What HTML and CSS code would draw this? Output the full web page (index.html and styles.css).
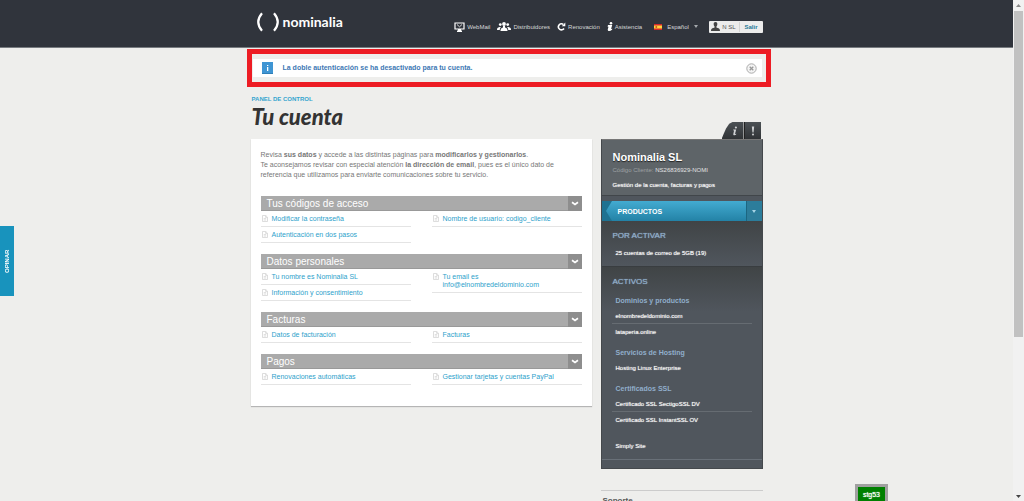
FILE: index.html
```html
<!DOCTYPE html>
<html lang="es">
<head>
<meta charset="utf-8">
<title>Nominalia - Tu cuenta</title>
<link rel="stylesheet" href="styles.css">
</head>
<body>
<svg class="defs" aria-hidden="true">
  <symbol id="doc" viewBox="0 0 6 7"><path d="M.5.5h3.3l1.7 1.7v4.3h-5zM3.6.7v1.7h1.7M1.7 3.6h2.5M1.7 5h2.5" fill="none" stroke="#cfcfcf" stroke-width=".7"/></symbol>
  <symbol id="chev" viewBox="0 0 8 5"><path d="M1 1.2l3 2.2 3-2.2" fill="none" stroke="#fff" stroke-width="1.7"/></symbol>
</svg>
<div class="page">
  <header class="header">
    <div class="wrap header-in">
      <a class="logo" href="#">
        <svg width="26" height="20" viewBox="0 0 26 20" aria-hidden="true"><path d="M6 1.200Q-1.500 10 6 18.800M18 1.200Q25.500 10 18 18.800" fill="none" stroke="#fff" stroke-width="2.200"/></svg>
        <span>nominalia</span>
      </a>
      <nav class="nav">
        <a href="#"><svg width="11" height="10" viewBox="0 0 11 10"><path d="M1 1h9v6H1z" fill="none" stroke="#fff" stroke-width="1.200"/><path d="M3 2.500l2.500 2.300L8 2.500" fill="none" stroke="#fff" stroke-width=".8"/><path d="M4 7h3v1.500h1V10H3V8.500h1z" fill="#fff"/></svg>WebMail</a>
        <a href="#"><svg width="14" height="9" viewBox="0 0 14 9" fill="#fff"><circle cx="7" cy="2" r="1.900"/><circle cx="3.300" cy="2.600" r="1.400"/><circle cx="10.700" cy="2.600" r="1.400"/><path d="M3.500 9c0-2 .5-3 2.500-3.500V4h2v1.500c2 .5 2.500 1.500 2.500 3.500zM0 8c0-1.800.5-2.500 2.500-3l1.500.2C3 6 2.800 7 2.800 8zM14 8c0-1.800-.5-2.500-2.500-3l-1.500.2C11 6 11.200 7 11.200 8z"/></svg>Distribuidores</a>
        <a href="#"><svg width="9" height="9" viewBox="0 0 9 9"><path d="M6.300 2.300A3 3.100 0 1 0 7 6.500" fill="none" stroke="#fff" stroke-width="1.600"/><path d="M8.300.4v3.800H4.800z" fill="#fff"/></svg>Renovación</a>
        <a href="#"><svg width="6" height="9" viewBox="0 0 6 9" fill="#fff"><circle cx="4" cy="1.300" r="1.300"/><path d="M1 3.100h4.200L4.100 7l1.300-.3-.4 1C3 9.500.4 9.300.8 7.300l.7-2.600H.6z"/></svg>Asistencia</a>
      </nav>
      <label class="lang">
        <svg width="8" height="6" viewBox="0 0 8 6" aria-label="Idioma"><path d="M0 0h8v6H0z" fill="#d3272b"/><path d="M0 1.500h8v3H0z" fill="#ffd23c"/><path d="M1.500 2h1.600v2H1.500z" fill="#c9661e"/></svg>
        <select><option>Español</option></select>
        <svg width="4" height="3" viewBox="0 0 4 3" aria-hidden="true"><path d="M0 0h4L2 3z" fill="#a5a9ad"/></svg>
      </label>
      <div class="user">
        <svg width="9" height="9" viewBox="0 0 9 9" aria-hidden="true"><path d="M4.500 0C6 0 6.500 1 6.300 2.500 6.200 3.600 5.700 4.200 5.400 4.600v.8C7 6 9 6 9 9H0c0-3 2-3 3.600-3.600v-.8C3.300 4.200 2.800 3.600 2.700 2.500 2.500 1 3 0 4.500 0z" fill="#444"/></svg>
        <span>N SL</span><a href="#">Salir</a>
      </div>
    </div>
  </header>

  <div class="wrap">
    <div class="callout">
      <div class="notice" role="status">
        <svg width="11" height="12" viewBox="0 0 11 12" aria-hidden="true"><path d="M0 0h11v12H0z" fill="#2f7fb8"/><path d="M0 0h11v11H0z" fill="#3f95d3"/><path d="M5 3h1.300v1H5zM5 5h1.300v4H5z" fill="#fff"/></svg>
        <p>La doble autenticación se ha desactivado para tu cuenta.</p>
        <button class="close" type="button" aria-label="Cerrar"><svg width="11" height="11" viewBox="0 0 11 11"><circle cx="5.500" cy="5.500" r="4.700" fill="#f4f4f4" stroke="#aaa"/><path d="M3.700 3.700l3.600 3.600M7.300 3.700L3.700 7.300" stroke="#999" stroke-width="1.300"/></svg></button>
      </div>
    </div>
  </div>

  <div class="wrap columns">
    <main class="main">
      <a class="crumb" href="#">PANEL DE CONTROL</a>
      <h1>Tu cuenta</h1>
      <div class="card">
        <p class="intro">Revisa <b>sus datos</b> y accede a las distintas páginas para <b>modificarlos y gestionarlos</b>.<br>Te aconsejamos revisar con especial atención <b>la dirección de email</b>, pues es el único dato de<br>referencia que utilizamos para enviarte comunicaciones sobre tu servicio.</p>

        <section class="group">
          <h2>Tus códigos de acceso<button type="button" aria-label="Plegar"><svg width="8" height="5"><use href="#chev"/></svg></button></h2>
          <div class="lists">
            <ul>
              <li><svg width="6" height="7"><use href="#doc"/></svg><a href="#">Modificar la contraseña</a></li>
              <li><svg width="6" height="7"><use href="#doc"/></svg><a href="#">Autenticación en dos pasos</a></li>
            </ul>
            <ul>
              <li><svg width="6" height="7"><use href="#doc"/></svg><a href="#">Nombre de usuario: codigo_cliente</a></li>
            </ul>
          </div>
        </section>

        <section class="group">
          <h2>Datos personales<button type="button" aria-label="Plegar"><svg width="8" height="5"><use href="#chev"/></svg></button></h2>
          <div class="lists">
            <ul>
              <li><svg width="6" height="7"><use href="#doc"/></svg><a href="#">Tu nombre es Nominalia SL</a></li>
              <li><svg width="6" height="7"><use href="#doc"/></svg><a href="#">Información y consentimiento</a></li>
            </ul>
            <ul>
              <li><svg width="6" height="7"><use href="#doc"/></svg><a href="#">Tu email es<br>info@elnombredeldominio.com</a></li>
            </ul>
          </div>
        </section>

        <section class="group">
          <h2>Facturas<button type="button" aria-label="Plegar"><svg width="8" height="5"><use href="#chev"/></svg></button></h2>
          <div class="lists">
            <ul>
              <li><svg width="6" height="7"><use href="#doc"/></svg><a href="#">Datos de facturación</a></li>
            </ul>
            <ul>
              <li><svg width="6" height="7"><use href="#doc"/></svg><a href="#">Facturas</a></li>
            </ul>
          </div>
        </section>

        <section class="group">
          <h2>Pagos<button type="button" aria-label="Plegar"><svg width="8" height="5"><use href="#chev"/></svg></button></h2>
          <div class="lists">
            <ul>
              <li><svg width="6" height="7"><use href="#doc"/></svg><a href="#">Renovaciones automáticas</a></li>
            </ul>
            <ul>
              <li><svg width="6" height="7"><use href="#doc"/></svg><a href="#">Gestionar tarjetas y cuentas PayPal</a></li>
            </ul>
          </div>
        </section>
      </div>
    </main>

    <aside class="side">
      <div class="tabs">
        <button class="tab tab-info" type="button" aria-label="Información"><svg width="8" height="10" viewBox="0 0 8 10" fill="#d0d2d4"><circle cx="4.900" cy="1.500" r="1.100"/><path d="M2.300 3.500h2.900L4 8l1.300-.2-.2.700C4 9.600 2 9.600 2.300 8l.8-3.600-1-.1z"/></svg></button>
        <button class="tab" type="button" aria-label="Avisos"><svg width="4" height="10" viewBox="0 0 4 10" fill="#d0d2d4"><path d="M.8.500h2.400L2.500 6.500h-1z"/><circle cx="2" cy="8.500" r="1"/></svg></button>
      </div>
      <div class="panel">
        <div class="account">
          <h2>Nominalia SL</h2>
          <p class="code">Código Cliente: <b>NS26836929-NOMI</b></p>
          <a href="#">Gestión de la cuenta, facturas y pagos</a>
        </div>
        <button class="products" type="button">
          <svg class="notch" width="10" height="20" viewBox="0 0 10 20" preserveAspectRatio="none" aria-hidden="true"><path d="M0 0h10L4 10l6 10H0z" fill="#1f7291"/></svg>
          <span>PRODUCTOS</span>
          <span class="drop"><svg width="4" height="3" viewBox="0 0 4 3"><path d="M0 0h4L2 3z" fill="#a5d4e6"/></svg></span>
        </button>
        <section class="block">
          <h3>POR ACTIVAR</h3>
          <ul><li><a href="#">25 cuentas de correo de 5GB (19)</a></li></ul>
        </section>
        <section class="block active">
          <h3>ACTIVOS</h3>
          <h4>Dominios y productos</h4>
          <ul><li><a href="#">elnombredeldominio.com</a></li><li><a href="#">lataperia.online</a></li></ul>
          <h4>Servicios de Hosting</h4>
          <ul><li><a href="#">Hosting Linux Enterprise</a></li></ul>
          <h4>Certificados SSL</h4>
          <ul><li><a href="#">Certificado SSL SectigoSSL DV</a></li><li><a href="#">Certificado SSL InstantSSL OV</a></li></ul>
          <ul class="extra"><li><a href="#">Simply Site</a></li></ul>
        </section>
      </div>
      <h2 class="support">Soporte</h2>
    </aside>
  </div>
</div>
<div class="scroll" aria-hidden="true">
  <svg width="5" height="3" viewBox="0 0 5 3"><path d="M0 3h5L2.500 0z" fill="#888"/></svg>
  <div class="thumb"></div>
  <svg class="down" width="5" height="3" viewBox="0 0 5 3"><path d="M0 0h5L2.500 3z" fill="#444"/></svg>
</div>
<button class="opinar" type="button">OPINAR</button>
<div class="env">stg53</div>
</body>
</html>
```
FILE: styles.css
```css
* { box-sizing: border-box; }
body, h1, h2, h3, h4, p, ul { margin: 0; padding: 0; }
body {
  display: flex;
  height: 100vh;
  overflow: hidden;
  background: #eeeeec;
  color: #777;
  font: 7px/10px "Liberation Sans", Arial, sans-serif;
}
ul { list-style: none; }
a { color: inherit; text-decoration: none; }
button, select { margin: 0; padding: 0; border: 0; background: none; color: inherit; font: inherit; }
svg { display: block; flex: none; }
.defs { position: absolute; width: 0; height: 0; }
.page { flex: 1; min-width: 0; }
.wrap { width: 100%; max-width: 512px; margin: 0 auto; }

.header { background: #30343c; border-bottom: 1px solid #777b80; color: #d6d7d9; }
.header-in { display: flex; align-items: center; height: 47px; padding-top: 6px; font-size: 6px; }
.logo { display: flex; align-items: center; gap: 1px; margin: 0 auto 9px 5px; color: #fff; font: 14px/20px Lato, sans-serif; }
.logo span { font-weight: bold; }
.nav { display: flex; gap: 7px; }
.nav a { display: flex; align-items: center; gap: 2px; }
.lang { display: flex; align-items: center; gap: 5px; margin: 0 11px 0 12px; }
.lang select { appearance: none; }
.user { display: flex; align-items: center; gap: 2px; height: 12px; padding: 0 5px 0 2px; border-radius: 1px; background: #ececec; color: #555; }
.user a { margin-left: 2px; padding-left: 4px; border-left: 1px solid #d5d5d5; color: #1b7796; font-weight: bold; }

.callout { margin: 1px -8px 0 -4px; padding: 5px 4px 5px 1px; border: 5px solid #ed1c24; }
.notice { display: flex; align-items: center; height: 18px; padding: 0 5px 0 9px; background: #fff; }
.notice p { flex: 1; margin-left: 10px; color: #3e78b4; font-weight: bold; }

.columns { display: flex; align-items: flex-start; gap: 9px; }
.main { flex: 1; min-width: 0; padding-top: 7px; }
.crumb { display: block; padding-left: 1px; color: #35a5cf; font-size: 6px; font-weight: bold; }
h1 { margin: 0 0 9px; padding-left: 1px; color: #333; font: italic 900 22px/26px Lato, sans-serif; }
.card { padding: 11px 10px 21px; background: #fff; box-shadow: 0 1px 1px #b5b5b5; }
.group { margin-top: 11px; }
.intro + .group { margin-top: 16px; }
.group h2 { display: flex; justify-content: space-between; height: 15px; padding-left: 6px; border-bottom: 1px solid #999; background: #aaa; color: #fff; font-size: 10px; font-weight: normal; line-height: 15px; }
.group h2 button { display: grid; place-items: center; width: 14px; height: 15px; background: #8e8e8e; }
.lists { display: grid; grid-template-columns: 1fr 1fr; gap: 21px; align-items: start; }
.lists li { display: flex; gap: 4px; padding: 4px 0 3px 1px; border-bottom: 1px solid #e4e4e4; color: #2e9fcb; line-height: 8px; }

.side { width: 162px; padding-top: 35px; }
.tabs { display: flex; justify-content: flex-end; height: 17px; padding-right: 2px; }
.tab { display: grid; place-items: center; width: 17px; border-left: 1px solid #222; background: linear-gradient(#4c5155, #303336); }
.tab-info { width: 22px; padding-left: 5px; border: 0; clip-path: polygon(0 100%, 20% 40%, 35% 10%, 50% 0, 100% 0, 100% 100%); }
.panel { padding-bottom: 8px; border: 1px solid #44484c; border-top-color: #777; background: #50565d; color: #fff; font-size: 6px; }
.account { height: 56px; padding: 9px 11px 0; border-bottom: 1px solid #41464a; background: #5e6468; line-height: 8px; }
.account h2 { font-size: 11px; line-height: 17px; text-shadow: 0 1px 1px #222; }
.account p { margin-bottom: 7px; color: #9da1a4; }
.code b { color: #e2e2e2; font-weight: normal; }
.account a, .block a { text-shadow: 0 0 1px #ddd; }
.products { display: flex; align-items: stretch; width: 100%; height: 20px; margin-top: 5px; background: linear-gradient(#43abd1, #2382a6); color: #fff; font-size: 7px; font-weight: bold; line-height: 22px; text-align: left; }
.products span { flex: 1; padding-left: 6px; }
.products .drop { display: grid; flex: none; place-items: center; width: 16px; padding: 0; border-left: 1px solid #1c6681; background: #2c7d9b; }
.block { padding: 9px 10px 6px; background: linear-gradient(#404446, #50565d 45px); }
.block ul { margin-top: 3px; }
.active { padding-bottom: 6px; border-top: 1px solid #393d40; border-bottom: 1px solid #697078; }
.block h3 { padding-left: 1px; color: #90aecb; font-size: 8px; font-weight: normal; line-height: 12px; text-shadow: 0 0 1px #90aecb; }
.block h4 { margin-top: 10px; padding-left: 4px; color: #90aecb; font-size: 7px; line-height: 8px; }
.block h3 + h4 { margin-top: 9px; }
.block li { padding: 4px 4px 3px; line-height: 8px; }
.block li + li { border-top: 1px solid #666c72; }
.block .extra { margin-top: 11px; }
.support { margin-top: 21px; padding: 5px 0 0 2px; border-top: 1px solid #ccc; color: #555; font-size: 8px; line-height: 10px; }

.scroll { display: flex; flex-direction: column; align-items: center; width: 11px; padding: 4px 0 3px; background: #f1f1f1; }
.thumb { width: 9px; height: 66%; margin-top: 4px; background: #c1c1c1; }
.down { margin-top: auto; }
.opinar { position: fixed; top: 226px; left: 0; width: 14px; height: 70px; background: #1893bd; color: #fff; font-size: 6px; font-weight: bold; line-height: 14px; writing-mode: vertical-rl; rotate: 180deg; }
.env { position: fixed; right: 136px; bottom: -5px; padding: 2px 5px 3px; border: 3px solid #a0a0a0; background: #008000; color: #fff; font-size: 7px; line-height: 11px; text-shadow: 0 0 1px #fff; }
```
